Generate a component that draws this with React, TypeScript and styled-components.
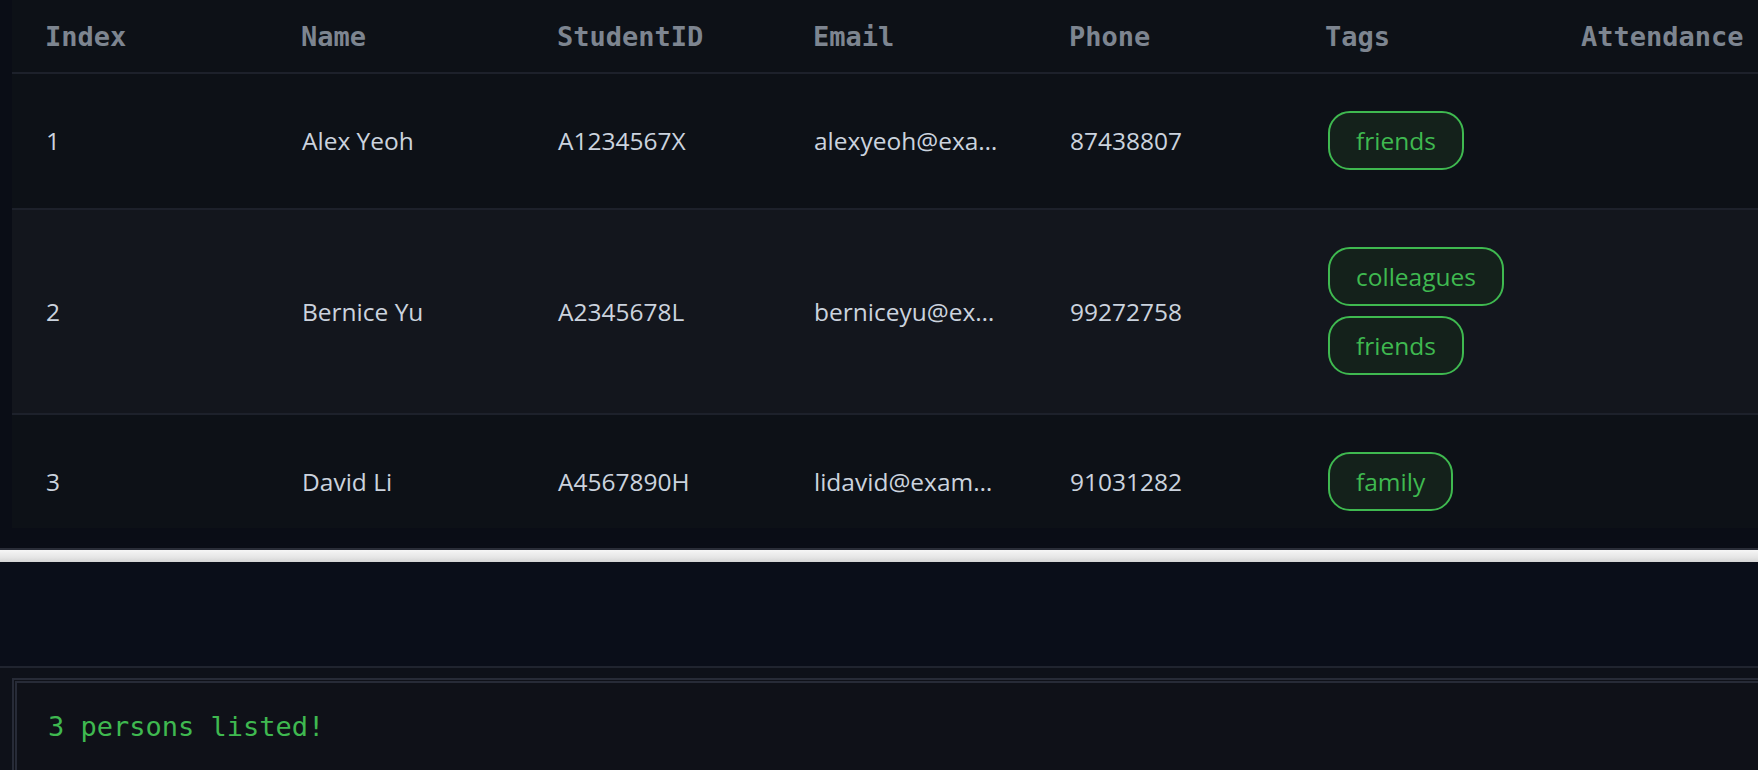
import React from "react";
import styled, { createGlobalStyle } from "styled-components";

const GlobalStyle = createGlobalStyle`
  html, body {
    margin: 0;
    padding: 0;
    background: #0a0d16;
    overflow: hidden;
  }
  * { box-sizing: border-box; }
`;

const Page = styled.div`
  width: 1758px;
  height: 770px;
  display: flex;
  flex-direction: column;
  background: #0a0d16;
  overflow: hidden;
`;

const ListPane = styled.div`
  height: 548px;
  flex: none;
  padding-left: 12px;
  background: #0a0d16;
  overflow: hidden;
`;

const TableViewport = styled.div`
  height: 528px;
  overflow: hidden;
  background: #0d1117;
`;

const Row = styled.div<{ $alt?: boolean; $header?: boolean }>`
  display: grid;
  grid-template-columns: repeat(7, 256px);
  width: 1792px;
  align-items: center;
  background: ${(p) => (p.$alt ? "#13161d" : "#0d1117")};
  border-bottom: 2px solid #1d212b;
  min-height: ${(p) => (p.$header ? "74px" : "auto")};
  padding: ${(p) => (p.$header ? "0" : "37px 0 38px")};
`;

const HeadCell = styled.div`
  padding-left: 33px;
  font-family: "DejaVu Sans Mono", "Liberation Mono", monospace;
  font-weight: bold;
  font-size: 27px;
  color: #7d8590;
  white-space: nowrap;
`;

const Cell = styled.div`
  padding-left: 34px;
  padding-right: 36px;
  font-family: "Open Sans", "Noto Sans", sans-serif;
  font-size: 24.5px;
  color: #cbd3de;
  white-space: nowrap;
  overflow: hidden;
  text-overflow: ellipsis;
`;

const TagCell = styled.div`
  padding-left: 36px;
  display: flex;
  flex-direction: column;
  align-items: flex-start;
  gap: 10px;
`;

const Tag = styled.span`
  display: inline-block;
  padding: 11px 26px;
  line-height: 33px;
  border: 2px solid #3fb950;
  border-radius: 22px;
  background: #14211b;
  color: #3fb950;
  font-family: "Open Sans", "Noto Sans", sans-serif;
  font-size: 24.5px;
  white-space: nowrap;
`;

const Divider = styled.div`
  height: 14px;
  flex: none;
  border-top: 2px solid #2a2d38;
  background: linear-gradient(#f6f6f6, #e6e6e6 60%, #d4d4d4);
`;

const MiddlePane = styled.div`
  height: 104px;
  flex: none;
  background: #0a0e19;
`;

const ResultPane = styled.div`
  flex: 1;
  border-top: 2px solid #20242f;
  background: #0e1119;
  padding: 10px 0 0 12px;
`;

const ResultBox = styled.div`
  height: 100%;
  border-top: 5px double #272b37;
  border-left: 5px double #272b37;
  background: #0f1118;
  padding: 28px 31px 0;
  font-family: "DejaVu Sans Mono", "Liberation Mono", monospace;
  font-size: 27px;
  color: #3fb950;
  white-space: pre;
`;

type Person = {
  name: string;
  id: string;
  email: string;
  phone: string;
  tags: string[];
};

const persons: Person[] = [
  { name: "Alex Yeoh", id: "A1234567X", email: "alexyeoh@example.com", phone: "87438807", tags: ["friends"] },
  { name: "Bernice Yu", id: "A2345678L", email: "berniceyu@example.com", phone: "99272758", tags: ["colleagues", "friends"] },
  { name: "David Li", id: "A4567890H", email: "lidavid@example.com", phone: "91031282", tags: ["family"] },
];

const headers = ["Index", "Name", "StudentID", "Email", "Phone", "Tags", "Attendance"];

export default function App() {
  return (
    <>
      <GlobalStyle />
      <Page>
        <ListPane>
          <TableViewport>
            <Row $header>
              {headers.map((h) => (
                <HeadCell key={h}>{h}</HeadCell>
              ))}
            </Row>
            {persons.map((p, i) => (
              <Row key={p.id} $alt={i % 2 === 1}>
                <Cell>{i + 1}</Cell>
                <Cell>{p.name}</Cell>
                <Cell>{p.id}</Cell>
                <Cell>{p.email}</Cell>
                <Cell>{p.phone}</Cell>
                <TagCell>
                  {p.tags.map((t) => (
                    <Tag key={t}>{t}</Tag>
                  ))}
                </TagCell>
                <Cell />
              </Row>
            ))}
          </TableViewport>
        </ListPane>
        <Divider />
        <MiddlePane />
        <ResultPane>
          <ResultBox>3 persons listed!</ResultBox>
        </ResultPane>
      </Page>
    </>
  );
}
